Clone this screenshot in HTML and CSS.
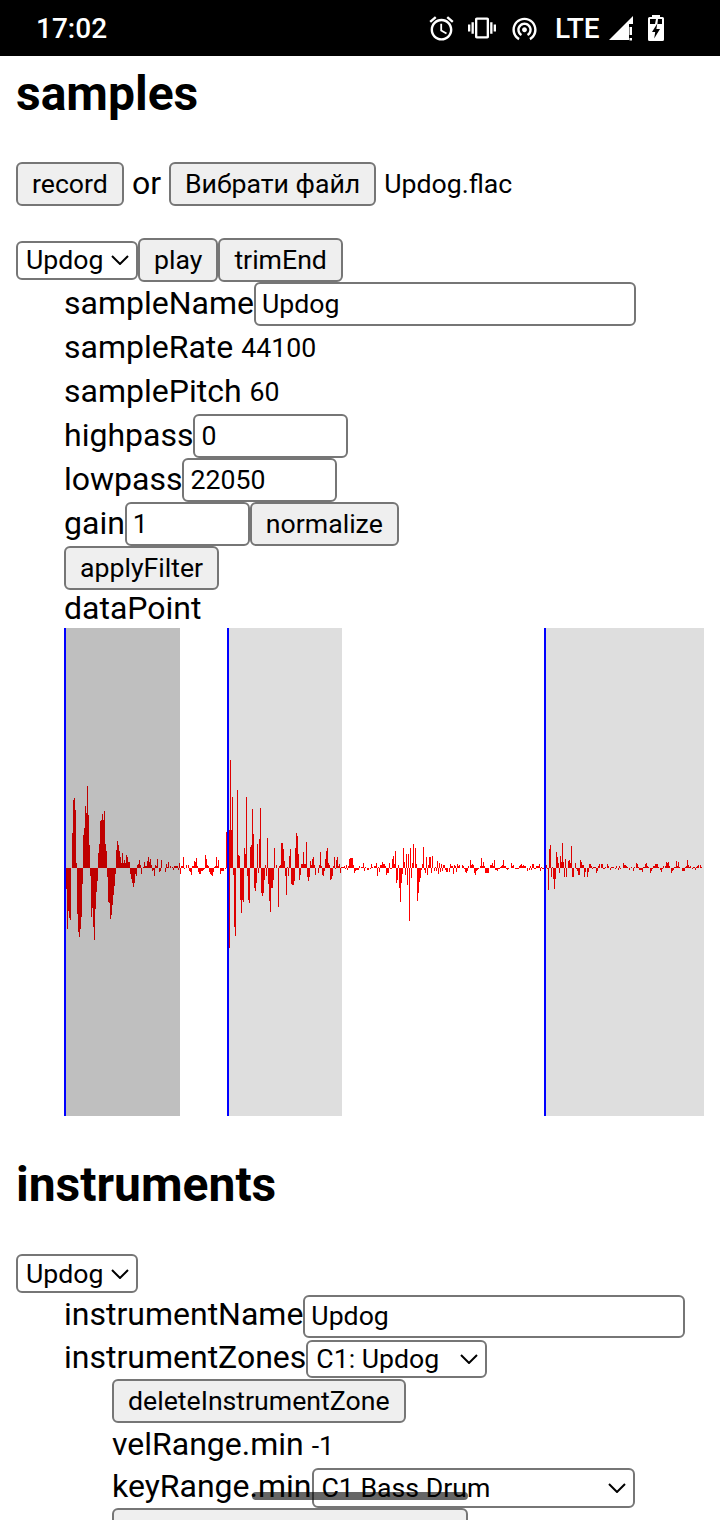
FILE: index.html
```html
<!DOCTYPE html>
<html lang="en">
<head>
    <meta charset="UTF-8">
    <meta name="viewport" content="width=device-width, initial-scale=1.0">
    <title>samples</title>
    <link rel="stylesheet" href="styles.css">
</head>
<body>
    <div class="screen">
        <div class="status-bar">
            <span class="clock">17:02</span>
            <svg class="icon icon-alarm" viewBox="0 0 24 24"><path d="M22 5.72l-4.6-3.86-1.29 1.53 4.6 3.86L22 5.72zM7.88 3.39L6.6 1.86 2 5.71l1.29 1.53 4.59-3.85zM12.5 8H11v6l4.75 2.85.75-1.23-4-2.37V8zM12 4c-4.97 0-9 4.03-9 9s4.03 9 9 9 9-4.03 9-9-4.03-9-9-9zm0 16c-3.87 0-7-3.13-7-7s3.13-7 7-7 7 3.13 7 7-3.13 7-7 7z"/></svg>
            <svg class="icon icon-vibrate" viewBox="0 0 24 24"><path d="M0 15h2V9H0v6zm3 2h2V7H3v10zm19-8v6h2V9h-2zm-3 8h2V7h-2v10zM16.5 3h-9C6.67 3 6 3.67 6 4.5v15c0 .83.67 1.5 1.5 1.5h9c.83 0 1.5-.67 1.5-1.5v-15c0-.83-.67-1.5-1.5-1.5zM16 19H8V5h8v14z"/></svg>
            <svg class="icon icon-hotspot" viewBox="0 0 24 24"><path d="M12 11c-1.1 0-2 .9-2 2s.9 2 2 2 2-.9 2-2-.9-2-2-2zm6 2c0-3.31-2.69-6-6-6s-6 2.69-6 6c0 2.22 1.21 4.15 3 5.19l1-1.74c-1.19-.7-2-1.97-2-3.45 0-2.21 1.79-4 4-4s4 1.79 4 4c0 1.48-.81 2.75-2 3.45l1 1.74c1.79-1.04 3-2.97 3-5.19zM12 3C6.48 3 2 7.48 2 13c0 3.7 2.01 6.92 4.99 8.65l1-1.73C5.61 18.53 4 15.96 4 13c0-4.42 3.58-8 8-8s8 3.58 8 8c0 2.96-1.61 5.53-4 6.92l1 1.73c2.99-1.73 5-4.95 5-8.65 0-5.52-4.48-10-10-10z"/></svg>
            <span class="network">LTE</span>
            <svg class="icon icon-signal" viewBox="0 0 24 26"><path d="M0 25L24 1v8h-4v16zM20.500 12h2.500v8h-2.500zM20.500 23h2.500v2.500h-2.500z"/></svg>
            <svg class="icon icon-battery" viewBox="0 0 16 26"><path fill-rule="evenodd" d="M4 0h8v2h2.500q1.500 0 1.500 1.500v21q0 1.500-1.500 1.500h-13q-1.500 0-1.500-1.500v-21q0-1.500 1.500-1.500h2.500zM2 4v5h5l1-5zM10 4l-.6 5h4.600v-5zM9 9l-5 8h3.200l-1 6.500 5.800-9.500h-3.600l.8-5z"/></svg>
        </div>

        <div class="content">
            <h1>samples</h1>
            <div class="source-row">
                <button class="btn">record</button>
                <span class="label">or</span>
                <button class="btn">Вибрати файл</button>
                <span class="file-name">Updog.flac</span>
            </div>

            <div class="sample-bar">
                <select class="select select-name"><option>Updog</option></select>
                <button class="btn">play</button>
                <button class="btn">trimEnd</button>
            </div>

            <div class="fields">
                <div class="field"><span class="label">sampleName</span><input class="input input-wide" value="Updog"></div>
                <div class="field"><span class="label">sampleRate</span><span class="value">44100</span></div>
                <div class="field"><span class="label">samplePitch</span><span class="value">60</span></div>
                <div class="field"><span class="label">highpass</span><input class="input input-num" value="0"></div>
                <div class="field"><span class="label">lowpass</span><input class="input input-num" value="22050"></div>
                <div class="field"><span class="label">gain</span><input class="input input-gain" value="1"><button class="btn">normalize</button></div>
                <div class="field"><button class="btn">applyFilter</button></div>
                <div class="field field-short"><span class="label">dataPoint</span></div>
                <canvas class="wave" id="wave" width="640" height="488"></canvas>
            </div>

            <h1 class="second">instruments</h1>
            <div class="instrument-bar">
                <select class="select select-name"><option>Updog</option></select>
            </div>

            <div class="fields instrument-fields">
                <div class="field field-name"><span class="label">instrumentName</span><input class="input input-wide" value="Updog"></div>
                <div class="field field-zones"><span class="label">instrumentZones</span><select class="select select-zone"><option>C1: Updog</option></select></div>
                <div class="zone">
                    <div class="field"><button class="btn">deleteInstrumentZone</button></div>
                    <div class="field field-vel"><span class="label">velRange.min</span><span class="value">-1</span></div>
                    <div class="field field-key"><span class="label">keyRange.min</span><select class="select select-key"><option>C1 Bass Drum</option></select></div>
                    <div class="field"><button class="btn btn-cut"></button></div>
                </div>
            </div>
        </div>

        <div class="home-bar"></div>
    </div>

    <script src="waveform.js"></script>
</body>
</html>
```

FILE: styles.css
```css
* {
    box-sizing: border-box;
}

body {
    margin: 0;
    font-family: Roboto, sans-serif;
    font-size: 32px;
    color: #000;
    background-color: #fff;
}

.screen {
    position: relative;
    width: 720px;
    height: 1520px;
    overflow: hidden;
}

.status-bar {
    display: flex;
    align-items: center;
    height: 56px;
    padding: 0 56px 0 36px;
    background-color: #000;
    color: #fff;
}

.clock {
    margin-right: auto;
    font-size: 28px;
    font-weight: 500;
}

.icon {
    flex: none;
    fill: #fff;
}

.icon-alarm {
    width: 29px;
    height: 29px;
}

.icon-vibrate {
    width: 28px;
    height: 28px;
    margin-left: 12px;
}

.icon-hotspot {
    width: 29px;
    height: 29px;
    margin-left: 14px;
}

.network {
    width: 45px;
    margin-left: 16px;
    font-size: 28px;
    font-weight: 500;
}

.icon-signal {
    width: 24px;
    height: 26px;
    margin-left: 9px;
}

.icon-battery {
    width: 16px;
    height: 26px;
    margin-left: 15px;
}

.content {
    padding: 0 16px;
}

h1 {
    margin: 0;
    height: 76px;
    font-size: 48px;
    font-weight: 700;
    line-height: 76px;
}

.label {
    padding-bottom: 2px;
}

.instrument-fields .label {
    padding-bottom: 4px;
}

.source-row {
    display: flex;
    align-items: center;
    gap: 8px;
    margin-top: 30px;
}

.sample-bar {
    display: flex;
    align-items: center;
    margin-top: 32px;
    height: 44px;
}

.second {
    margin-top: 31px;
}

.instrument-bar {
    display: flex;
    align-items: center;
    height: 39px;
    margin-top: 31px;
    margin-bottom: 1px;
}

.fields {
    padding-left: 48px;
}

.field {
    display: flex;
    align-items: center;
    height: 44px;
    white-space: nowrap;
}

.field-short {
    height: 38px;
}

.field-name .input {
    height: 43px;
}

.field-zones {
    height: 41px;
}

.field-vel {
    height: 45px;
}

.field-key {
    height: 40px;
}

.zone {
    padding-left: 48px;
}

.value {
    margin-left: 8px;
    font-size: 26.67px;
}

.file-name {
    font-size: 26.67px;
}

.btn {
    height: 44px;
    padding: 0 14px;
    border: 2px solid #767676;
    border-radius: 6px;
    background-color: #efefef;
    color: #000;
    font-family: Roboto, sans-serif;
    font-size: 26.67px;
}

.btn-cut {
    width: 356px;
}

.input {
    height: 44px;
    padding: 2px 6px;
    border: 2px solid #767676;
    border-radius: 6px;
    background-color: #fff;
    color: #000;
    font-family: Roboto, sans-serif;
    font-size: 26.67px;
}

.input-wide {
    width: 382px;
}

.input-num {
    width: 155px;
}

.input-gain {
    width: 125px;
}

.select {
    height: 39px;
    padding: 0 0 0 8px;
    border: 2px solid #767676;
    border-radius: 6px;
    background-color: #fff;
    background-image: url("data:image/svg+xml,%3Csvg xmlns='http://www.w3.org/2000/svg' width='18' height='10' viewBox='0 0 18 10'%3E%3Cpath d='M1 1l8 8 8-8' fill='none' stroke='%23000' stroke-width='2'/%3E%3C/svg%3E");
    background-repeat: no-repeat;
    background-position: right 7px center;
    color: #000;
    font-family: Roboto, sans-serif;
    font-size: 26.67px;
    appearance: none;
}

.select-name {
    width: 122px;
}

.select-zone {
    width: 181px;
    height: 38px;
}

.select-key {
    width: 323px;
    height: 40px;
}

.wave {
    display: block;
    width: 640px;
    height: 488px;
}

.home-bar {
    position: absolute;
    left: 252px;
    top: 1492px;
    width: 216px;
    height: 8px;
    border-radius: 4px;
    background-color: rgba(0, 0, 0, 0.6);
}
```

FILE: waveform.js
```js
// peak per canvas column, positive goes up from the centre line, negative down
const first = [
    -21, -61, -43, -50, -52, 0, 35, 68, 70, 58, 5,
    -46, -64, -69, -61, -49, -16,
    33, 40, 62, 55, 82, 53, 23,
    -8, -49, -40, -59, -72, -41, -24, -13,
    15, 24, 47, 48, 54, 48, 57, 24, 17,
    -9, -34, -35, -51, -47, -37, -27, -18, -6,
    18, 27, 23, 17, 11, 5, 15, 5, 8, 5, 13, 11, 6, 6,
    -6, -11, -15, -19, -15, -6, -8,
    3, 4, 8, 3,
    -6, 0, 1, 6, 2, 2, 7, 11, 6, 9, 3, -3, -2, -8, 3, 2, 9, 0, -4, -3, 8, 0, 0, 0, -4, 4, 1, 6, 0, 2, 0, 1,
    -2, 2, 2, 2, 2, -2, 5, -6, 2, 2, 11, -1, 0, 3, 0, 3, -3, -4, -7, 2, 2, 7, 6, 10, 2, -4, -6, -6, -3, -3, -2, -1,
    13, 9, 3, 2, -4, -6, -7, -8, -4, 1, 2, 11, 2, 8, 0, -6, -3, -3, -3, 0, -1, 36, 0, -80, -80,
    108, 38, 71, -7, -59, -68, 0, 78, 13, 12, -32, -45, -32, -34, 20, 14, 71, -8, -32, -35, 21, 23, 59, 34,
    -20, -23, -15, 24, -5, 29, 60, -25, -28, -25, -12, 3, -8, 30, -16, -33, -44, -20, -20, -12, 20, 0, 3, 0, -39,
    2, 3, 25, 25, 19, 7, -8, -27, 1, -8, 12, 19, -16, -17, -17, -13, 20, 35, 32, 14, -12, -7, 4, 4, 16, 4, 4, 26,
    -9, -13, -9, 7, 3, 9, 11, 3, -7, 0, 0, -5, 3, 16, 2, -7, -8, -3, 9, 17, 20, 5, 3, -12, -11, -8, 2, 11, -1, 8, 11,
    2, 4, -5, 1, 1, 1, 2, -1, 3, -2, 2, 9
];

const second = [
    10, 10, 10, 3, -5, -3, -2, -2, -2, 2, 0, 1, 1, 5, -3, 1, 0, -2, -2, 0, -1, 4, 1, 0, 2, 2, 5, -8, 1, -4, 3, 3,
    6, 4, 4, 2, -7, -5, -5, 5, -1, -1, 9, 12, 4, 17, -15, -12, 3, -20, -34, -15, -6, 20, 6, -7, 14, -17, 14, -53,
    20, -10, 5, 24, 0, 20, 4, -33, -25, -14, -10, -2, 4, 21, -2, -5, 11, -7, 3, 11, 11, -5, 12, 0, -3, 1, -3, 7,
    -6, 5, -4, 4, -3, 3, 3, -2, -4, -4, 0, -4, 4, 2, 2, -6, 3, 2, -4, 4, 2, 3, 0, 0, 3, 2, -1, -4, -5, -3, 2, 0, 8,
    3, 4, 3, -5, -7, -3, -2, -1, 0, 2, 10, 2, 6, 2, -5, -5, -5, -5, 0, 3, 3, 5, 2, 8, -2, -2, -3, -1, -1, 1, 2, 3,
    8, 2, 2, -1, -2, -1, 0, 0, 5, 2, 3, 0, -1, -1, -1, -1, 2, 3, 4, 2, 3, 2, 2, 0, -3, 0, -2, 2, -2, 4, 4, -1, -1,
    2, 2, 2, 4, -3, 1, -1, -1, 0, 0, 3, -1, -22, 19, 23, -9, 1, -11, -21, -11, 16, 11, 5, -5, 12, 6, 25, 6, -9, 9,
    -9, 0, 7, 8, 5, 22, -9, -9, 0, 5, -1, -3, -7, -7, 8, 6, 3, 3, -9, -4, 0, -9, -4, 4, 4, 2, -1, 1, 1, 1, -5, -3,
    2, 4, 0, 4, 4, -1
];

const tail = [
    -1, 1, 0, 4, 2, 0, -2, 1, 1, 1, 0, -1, 2, 0, -2, 2, -1, 0, 0, 5, 3, 3, 2, 1, 0, -2, 0, 1, 0, -3, 1, 0, 5, 4,
    1, -2, -2, -2, -4, 1, 1, 4, 5, 2, 1, 0, -5, -3, -1, 2, 2, 4, 4, 4, 1, 0, -2, -4, -1, 2, 0, 2, 6, 5, 6, 2, 0,
    -5, -3, -2, 1, 1, 7, 2, 6, 1, 0, 0, -3, -3, -3, 1, 2, 8, 3, 1, 2, 0, -1, 1, 1, -2, 1, 2, 3, 0, 3, 1
];

const peaks = new Array(640).fill(0);
first.forEach((p, i) => { peaks[2 + i] = p; });
second.forEach((p, i) => { peaks[286 + i] = p; });
tail.forEach((p, i) => { peaks[540 + i] = p; });

const canvas = document.getElementById('wave');
const ctx = canvas.getContext('2d');
const middle = 240;

ctx.fillStyle = '#f00';
peaks.forEach((p, x) => {
    if (p > 0) ctx.fillRect(x, middle - p, 1, p);
    if (p < 0) ctx.fillRect(x, middle, 1, -p);
});
// these two columns swing both ways
ctx.fillRect(165, middle - 38, 1, 38);
ctx.fillRect(164, middle - 36, 1, 36);

// start to end of each slice
ctx.fillStyle = 'rgba(0, 0, 0, 0.25)';
ctx.fillRect(0, 0, 116, 488);
ctx.fillStyle = 'rgba(0, 0, 0, 0.13)';
ctx.fillRect(164, 0, 114, 488);
ctx.fillRect(481, 0, 159, 488);

ctx.fillStyle = '#00f';
ctx.fillRect(0, 0, 2, 488);
ctx.fillRect(163, 0, 2, 488);
ctx.fillRect(480, 0, 2, 488);
```
